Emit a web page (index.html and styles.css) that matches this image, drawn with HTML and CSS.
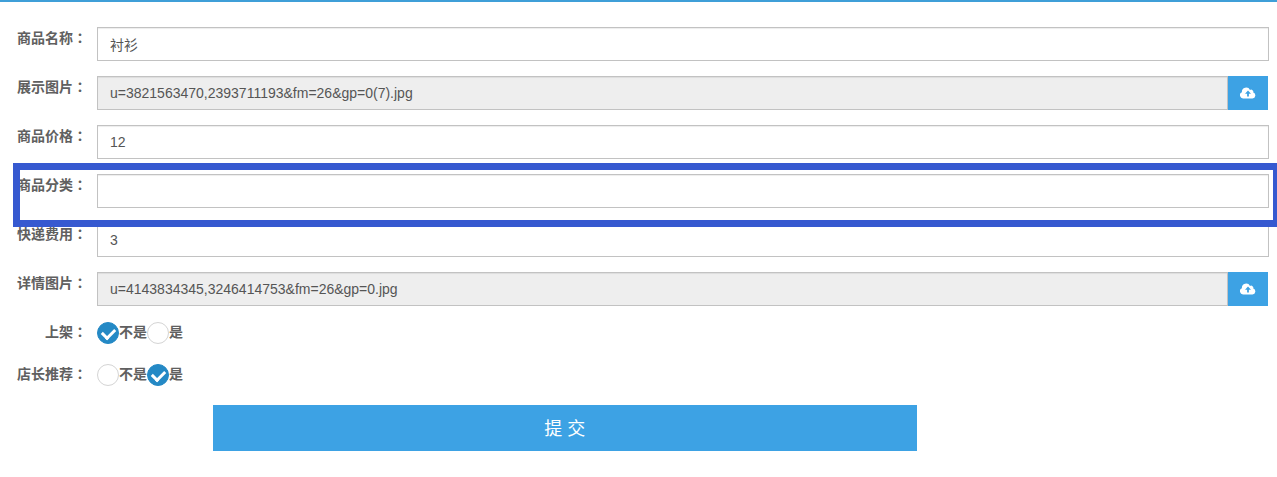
FILE: index.html
```html
<!DOCTYPE html>
<html lang="zh-CN">
<head>
  <meta charset="UTF-8">
  <meta name="viewport" content="width=device-width, initial-scale=1.0">
  <title>商品编辑</title>
  <link rel="stylesheet" href="styles.css">
</head>
<body>
  <form class="goods-form">
    <div class="form-row">
      <label class="form-label" for="name">商品名称<span class="colon" lang="zh-TW">：</span></label>
      <input class="form-input" type="text" id="name" value="衬衫">
    </div>

    <div class="form-row">
      <label class="form-label" for="cover">展示图片<span class="colon" lang="zh-TW">：</span></label>
      <div class="file-group">
        <input class="form-input" type="text" id="cover" value="u=3821563470,2393711193&amp;fm=26&amp;gp=0(7).jpg" readonly>
        <button class="upload-button" type="button" aria-label="上传展示图片">
          <svg class="upload-icon" viewBox="0 0 16 12"><path fill="#fff" d="M3.6 11.5A3.3 3.3 0 0 1 1.9 5.2 4.3 4.3 0 0 1 10 2.9a2.3 2.3 0 0 1 3.3 2.6 3.1 3.1 0 0 1-.8 6z"/><path fill="#3da2e4" d="M8 3.6l3 3.2H8.9v2.7H7.1V6.8H5z"/></svg>
        </button>
      </div>
    </div>

    <div class="form-row">
      <label class="form-label" for="price">商品价格<span class="colon" lang="zh-TW">：</span></label>
      <input class="form-input" type="text" id="price" value="12">
    </div>

    <div class="form-row highlight">
      <label class="form-label" for="category">商品分类<span class="colon" lang="zh-TW">：</span></label>
      <input class="form-input" type="text" id="category">
    </div>

    <div class="form-row">
      <label class="form-label" for="freight">快递费用<span class="colon" lang="zh-TW">：</span></label>
      <input class="form-input" type="text" id="freight" value="3">
    </div>

    <div class="form-row">
      <label class="form-label" for="detail">详情图片<span class="colon" lang="zh-TW">：</span></label>
      <div class="file-group">
        <input class="form-input" type="text" id="detail" value="u=4143834345,3246414753&amp;fm=26&amp;gp=0.jpg" readonly>
        <button class="upload-button" type="button" aria-label="上传详情图片">
          <svg class="upload-icon" viewBox="0 0 16 12"><path fill="#fff" d="M3.6 11.5A3.3 3.3 0 0 1 1.9 5.2 4.3 4.3 0 0 1 10 2.9a2.3 2.3 0 0 1 3.3 2.6 3.1 3.1 0 0 1-.8 6z"/><path fill="#3da2e4" d="M8 3.6l3 3.2H8.9v2.7H7.1V6.8H5z"/></svg>
        </button>
      </div>
    </div>

    <div class="form-row" role="radiogroup" aria-labelledby="sale-label">
      <span class="form-label" id="sale-label">上架<span class="colon" lang="zh-TW">：</span></span>
      <div class="radio-group">
        <label class="radio"><input type="radio" name="sale" checked>不是</label>
        <label class="radio"><input type="radio" name="sale">是</label>
      </div>
    </div>

    <div class="form-row" role="radiogroup" aria-labelledby="recommend-label">
      <span class="form-label" id="recommend-label">店长推荐<span class="colon" lang="zh-TW">：</span></span>
      <div class="radio-group">
        <label class="radio"><input type="radio" name="recommend">不是</label>
        <label class="radio"><input type="radio" name="recommend" checked>是</label>
      </div>
    </div>

    <button class="submit-button" type="submit">提 交</button>
  </form>
</body>
</html>
```
FILE: styles.css
```css
* {
  box-sizing: border-box;
}
body {
  margin: 0;
  border-top: 2px solid #3f9fd8;
  background-color: #fff;
  color: #555;
  font-family: "Liberation Sans", "Noto Sans CJK SC", sans-serif;
  font-size: 14px;
  overflow-x: hidden;
}
.goods-form {
  padding-top: 25px;
}
.form-row {
  position: relative;
  display: flex;
  align-items: flex-start;
  gap: 10px;
  margin-bottom: 15px;
  padding-right: 8px;
}
.form-label {
  flex: none;
  width: 87px;
  color: #606060;
  line-height: 20px;
  font-weight: bold;
  text-align: right;
}
/* Centred full-width colon */
.colon {
  font-family: "Noto Sans CJK TC", sans-serif;
}
.form-input {
  flex: 1;
  min-width: 0;
  height: 34px;
  padding: 6px 12px;
  border: 1px solid #c2c2c2;
  border-radius: 0;
  box-shadow: inset 0 1px 1px rgba(0, 0, 0, 0.075);
  background-color: #fff;
  color: #555;
  font-family: inherit;
  font-size: 14px;
}
.form-input[readonly] {
  background-color: #eee;
}
.file-group {
  flex: 1;
  display: flex;
  margin-right: 1px;
}
.upload-button {
  width: 40px;
  height: 34px;
  padding: 0;
  border: none;
  background-color: #3da2e4;
  cursor: pointer;
}
.upload-icon {
  display: block;
  width: 16px;
  height: 12px;
  margin: 0 auto;
}
/* Frame around the category row */
.highlight::after {
  content: "";
  position: absolute;
  z-index: 1;
  top: -11px;
  right: 0;
  bottom: -19px;
  left: 13px;
  border: 7px solid #3659d0;
  border-right-width: 4px;
  pointer-events: none;
}
.radio-group {
  display: flex;
  height: 27px;
  padding-top: 1px;
}
.radio {
  display: flex;
  height: 22px;
  color: #606060;
  line-height: 20px;
  font-weight: bold;
}
.radio input {
  appearance: none;
  display: grid;
  place-items: center;
  width: 22px;
  height: 22px;
  margin: 0;
  border: 1px solid #d4d4d4;
  border-radius: 50%;
  background-color: #fff;
}
.radio input:checked {
  border-color: #2489c5;
  background-color: #2489c5;
}
.radio input:checked::before {
  content: "";
  width: 10px;
  height: 6px;
  border: solid #fff;
  border-width: 0 0 3px 3px;
  transform: translateY(-1px) rotate(-45deg);
}
.submit-button {
  display: block;
  width: 55.1%;
  height: 46px;
  margin-left: 16.67%;
  padding: 0 0 2px;
  border: none;
  background-color: #3da2e4;
  color: #fff;
  font-family: inherit;
  font-size: 18px;
  cursor: pointer;
}
```
